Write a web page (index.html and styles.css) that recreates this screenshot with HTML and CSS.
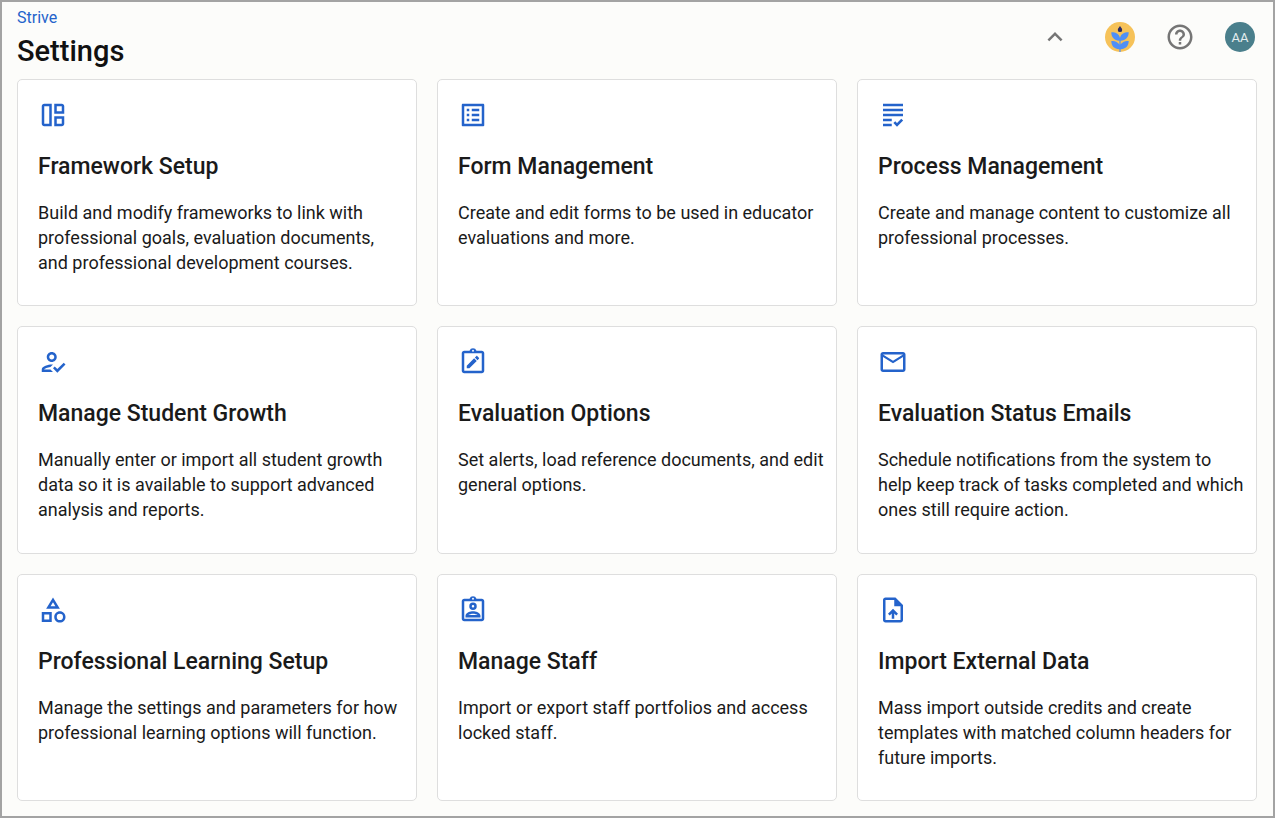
FILE: index.html
```
<!DOCTYPE html>
<html lang="en">
<head>
    <meta charset="UTF-8">
    <meta name="viewport" content="width=device-width, initial-scale=1.0">
    <title>Settings</title>
    <link rel="stylesheet" href="styles.css">
</head>
<body>
    <header class="header">
        <div class="heading">
            <a class="breadcrumb" href="#">Strive</a>
            <h1>Settings</h1>
        </div>
        <div class="tools">
            <button class="tool collapse" type="button" aria-label="Collapse">
                <svg viewBox="0 0 24 24"><path d="M12 8l-6 6 1.410 1.410L12 10.830l4.590 4.580L18 14z"/></svg>
            </button>
            <button class="tool" type="button" aria-label="Apps">
                <svg viewBox="0 0 30 30">
                    <circle cx="15" cy="15" r="15" fill="#f6c259"/>
                    <path d="M15 4c.9 1.400 2.200 2.400 2.200 3.900a2.200 2.200 0 0 1-4.400 0C12.800 6.400 14.100 5.400 15 4z" fill="#2b2a63"/>
                    <path d="M6.300 10.300c5 0 8 2 8.700 5.700.7-3.700 3.700-5.700 8.700-5.700 0 5-3 8.200-8 8.500h-1.400c-5-.3-8-3.500-8-8.500zM6.300 19c5 0 8 2 8.700 5.400.7-3.400 3.700-5.400 8.700-5.400 0 5-3 8-8 8.300h-1.400c-5-.3-8-3.300-8-8.300zM14.400 16h1.200v14h-1.200z" fill="#4f8ff7"/>
                </svg>
            </button>
            <button class="tool" type="button" aria-label="Help">
                <svg viewBox="0 0 24 24"><path d="M11 18h2v-2h-2v2zm1-16C6.480 2 2 6.480 2 12s4.480 10 10 10 10-4.480 10-10S17.520 2 12 2zm0 18c-4.410 0-8-3.590-8-8s3.590-8 8-8 8 3.590 8 8-3.590 8-8 8zm0-14c-2.210 0-4 1.790-4 4h2c0-1.100.9-2 2-2s2 .9 2 2c0 2-3 1.750-3 5h2c0-2.250 3-2.500 3-5 0-2.210-1.790-4-4-4z"/></svg>
            </button>
            <button class="tool avatar" type="button">AA</button>
        </div>
    </header>

    <main class="cards">
        <a class="card" href="#">
            <svg class="icon" viewBox="0 0 24 24"><path fill-rule="evenodd" d="M5 3h6v18H5c-1.100 0-2-.9-2-2V5c0-1.100.9-2 2-2zm0 2v14h4V5zM13 3h6c1.100 0 2 .9 2 2v6h-8zm2 2v4h4V5zM13 13h8v6c0 1.100-.9 2-2 2h-6zm2 2v4h4v-4z"/></svg>
            <h2>Framework Setup</h2>
            <p>Build and modify frameworks to link with professional goals, evaluation documents, and professional development courses.</p>
        </a>
        <a class="card" href="#">
            <svg class="icon" viewBox="0 0 24 24"><path d="M19 5v14H5V5h14m1.100-2H3.900c-.5 0-.9.4-.9.9v16.200c0 .4.4.9.9.9h16.200c.4 0 .9-.5.9-.9V3.900c0-.5-.5-.9-.9-.9zM11 7h6v2h-6V7zm0 4h6v2h-6v-2zm0 4h6v2h-6zM7 7h2v2H7zm0 4h2v2H7zm0 4h2v2H7z"/></svg>
            <h2>Form Management</h2>
            <p>Create and edit forms to be used in educator evaluations and more.</p>
        </a>
        <a class="card" href="#">
            <svg class="icon" viewBox="0 0 24 24"><path d="M4 3h16v2H4zM4 7h16v2H4zM4 11h16v2H4zM4 15h7v2H4zM4 19h7v2H4zM18.600 14.900l1.500 1.500-4.900 4.900-2.900-2.900 1.500-1.500 1.400 1.400z"/></svg>
            <h2>Process Management</h2>
            <p>Create and manage content to customize all professional processes.</p>
        </a>
        <a class="card" href="#">
            <svg class="icon" viewBox="0 0 24 24"><path d="M11 12c2.210 0 4-1.790 4-4s-1.790-4-4-4-4 1.790-4 4 1.790 4 4 4zm0-6c1.100 0 2 .9 2 2s-.9 2-2 2-2-.9-2-2 .9-2 2-2zm-1 12H5c.2-.63 2.570-1.680 4.960-1.940l2.040-2c-.39-.04-.68-.06-1-.06-2.670 0-8 1.340-8 4v2h9l-2-2zm10.600-5.500l-5.130 5.170-2.070-2.080L12 17l3.470 3.500L22 13.910z"/></svg>
            <h2>Manage Student Growth</h2>
            <p>Manually enter or import all student growth data so it is available to support advanced analysis and reports.</p>
        </a>
        <a class="card" href="#">
            <svg class="icon" viewBox="0 0 24 24"><path fill-rule="evenodd" d="M5 3h4.200a3 3 0 0 1 5.600 0H19c1.100 0 2 .9 2 2v14c0 1.100-.9 2-2 2H5c-1.100 0-2-.9-2-2V5c0-1.100.9-2 2-2zm0 2v14h14V5zm7-2.750a.75.75 0 1 0 0 1.500.75.75 0 0 0 0-1.500z"/><path d="M7 14.900V17h2.100l5.900-5.900-2.100-2.100zM13.500 8.400l2.100 2.100 1.100-1.100c.3-.3.3-.6 0-.9l-1.200-1.200c-.3-.3-.6-.3-.9 0z"/></svg>
            <h2>Evaluation Options</h2>
            <p>Set alerts, load reference documents, and edit general options.</p>
        </a>
        <a class="card" href="#">
            <svg class="icon" viewBox="0 0 24 24"><path d="M22 6c0-1.100-.9-2-2-2H4c-1.100 0-2 .9-2 2v12c0 1.100.9 2 2 2h16c1.100 0 2-.9 2-2V6zm-2 0l-8 5-8-5h16zm0 12H4V8l8 5 8-5v10z"/></svg>
            <h2>Evaluation Status Emails</h2>
            <p>Schedule notifications from the system to help keep track of tasks completed and which ones still require action.</p>
        </a>
        <a class="card" href="#">
            <svg class="icon" viewBox="0 0 24 24"><path d="M12 2l-5.500 9h11L12 2zm0 3.840L13.930 9h-3.870L12 5.840zM17.500 13c-2.490 0-4.500 2.010-4.500 4.500s2.010 4.500 4.500 4.500 4.500-2.010 4.500-4.500-2.010-4.500-4.500-4.500zm0 7a2.500 2.500 0 0 1 0-5 2.500 2.500 0 0 1 0 5zM3 21.500h8v-8H3v8zm2-6h4v4H5v-4z"/></svg>
            <h2>Professional Learning Setup</h2>
            <p>Manage the settings and parameters for how professional learning options will function.</p>
        </a>
        <a class="card" href="#">
            <svg class="icon" viewBox="0 0 24 24"><path fill-rule="evenodd" d="M5 3h4.200a3 3 0 0 1 5.600 0H19c1.100 0 2 .9 2 2v14c0 1.100-.9 2-2 2H5c-1.100 0-2-.9-2-2V5c0-1.100.9-2 2-2zm0 2v14h14V5zm7-2.750a.75.75 0 1 0 0 1.500.75.75 0 0 0 0-1.500zM12 6a3 3 0 1 1 0 6 3 3 0 0 1 0-6zm0 2a1 1 0 1 0 0 2 1 1 0 0 0 0-2zM6 18v-1.500c0-2.500 4-3.600 6-3.600s6 1.100 6 3.600V18zm2.300-2h7.400c-.7-.6-2.400-1.100-3.700-1.100s-3 .5-3.700 1.100z"/></svg>
            <h2>Manage Staff</h2>
            <p>Import or export staff portfolios and access locked staff.</p>
        </a>
        <a class="card" href="#">
            <svg class="icon" viewBox="0 0 24 24"><path d="M14 2H6c-1.100 0-1.990.9-1.990 2L4 20c0 1.100.89 2 1.990 2H18c1.100 0 2-.9 2-2V8l-6-6zm4 18H6V4h7v5h5v11zM8 15.010l1.410 1.410L11 14.840V19h2v-4.160l1.590 1.590L16 15.010 12.010 11 8 15.010z"/></svg>
            <h2>Import External Data</h2>
            <p>Mass import outside credits and create templates with matched column headers for future imports.</p>
        </a>
    </main>
</body>
</html>
```
FILE: styles.css
```
* {
    box-sizing: border-box;
}
body {
    display: flex;
    flex-direction: column;
    min-height: 100vh;
    margin: 0;
    padding: 4px 16px 15px 15px;
    border: 2px solid #a3a3a3;
    background-color: #fcfcfa;
    color: #1a1a1a;
    font-family: Roboto, "Liberation Sans", sans-serif;
}
h1, h2, p {
    margin: 0;
}
.header {
    display: flex;
    justify-content: space-between;
    align-items: flex-start;
    height: 73px;
}
.breadcrumb {
    display: block;
    color: #2463cb;
    font-size: 16px;
    line-height: 24px;
    text-decoration: none;
}
h1 {
    color: #111;
    font-size: 29px;
    font-weight: 500;
    line-height: 42px;
}
.tools {
    display: flex;
    gap: 30px;
    padding: 16px 2px 0 0;
}
.tool {
    width: 30px;
    height: 30px;
    padding: 0;
    border: none;
    border-radius: 50%;
    background: none;
    cursor: pointer;
}
.tool svg {
    display: block;
    width: 30px;
    height: 30px;
    fill: #757575;
}
.collapse {
    margin-right: 5px;
}
.avatar {
    background-color: #4a7f8c;
    color: #e4eef0;
    font-family: inherit;
    font-size: 13px;
}
.cards {
    display: grid;
    grid-template-columns: repeat(3, 1fr);
    grid-auto-rows: 1fr;
    flex: 1;
    gap: 20px;
}
.card {
    padding: 20px 12px 30px 20px;
    border: 1px solid #dedede;
    border-radius: 5px;
    background-color: #fff;
    color: inherit;
    text-decoration: none;
}
.icon {
    display: block;
    width: 30px;
    height: 30px;
    fill: #2463cb;
}
h2 {
    margin: 22px 0 18px;
    font-size: 23px;
    font-weight: 500;
    line-height: 30px;
}
.card p {
    font-size: 18px;
    line-height: 25px;
}
```
